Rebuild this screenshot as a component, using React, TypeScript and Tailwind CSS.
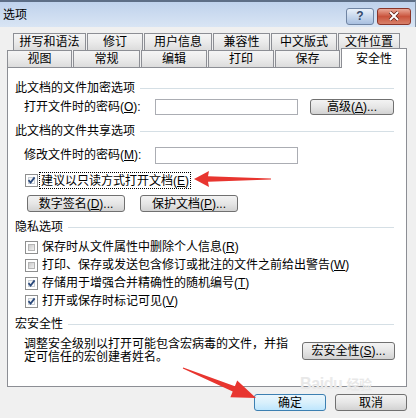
import React from "react";

const font = "font-['Liberation_Sans','Noto_Sans_CJK_SC',sans-serif]";

function Check({ checked }: { checked: boolean }) {
  return (
    <span className="w-[13px] h-[13px] border border-[#8e8f8f] bg-white p-[2px] flex shrink-0">
      <span
        className={
          checked
            ? "flex-1 flex items-center justify-center border border-[#c9cfd6] bg-gradient-to-br from-[#f4f4f4] to-[#ffffff]"
            : "flex-1 flex items-center justify-center border border-[#b5b5b5] bg-gradient-to-br from-[#cbcbcb] to-[#f1f1f1]"
        }
      >
        {checked && (
          <svg width="9" height="9" viewBox="0 0 9 9" className="-m-[2px]">
            <path d="M1.5 4.2 L3.6 6.6 L7.6 1.4" stroke="#2c4a7c" strokeWidth="1.8" fill="none" />
          </svg>
        )}
      </span>
    </span>
  );
}

function Btn({ children, className }: { children: React.ReactNode; className: string }) {
  return (
    <div
      className={
        "flex items-center justify-center rounded-[3px] border border-[#707070] bg-gradient-to-b from-[#f3f3f3] via-[#e6e6e6] to-[#d2d2d2] text-[12px] leading-none text-black " +
        className
      }
    >
      {children}
    </div>
  );
}

function Heading({ text }: { text: string }) {
  return (
    <div className="h-[16px] flex items-center pl-[7px] pr-[12px] gap-[5px] text-[12px] leading-none">
      <span>{text}</span>
      <div className="flex-1 h-px bg-[#d5dfe5]" />
    </div>
  );
}

const row1 = [
  { t: "拼写和语法", w: "w-[73px]" },
  { t: "修订", w: "w-[56px]" },
  { t: "用户信息", w: "w-[68px]" },
  { t: "兼容性", w: "w-[57px]" },
  { t: "中文版式", w: "w-[66px]" },
  { t: "文件位置", w: "w-[62px]" },
];
const row2 = [
  { t: "视图", w: "w-[65px]" },
  { t: "常规", w: "w-[67px]" },
  { t: "编辑", w: "w-[66px]" },
  { t: "打印", w: "w-[66px]" },
  { t: "保存", w: "w-[65px]" },
];

const tabCls =
  "h-[17px] border border-b-0 border-[#8c8e94] bg-gradient-to-b from-[#f5f5f5] via-[#ebebeb] to-[#dcdcdc] flex items-center justify-center text-[12px] leading-none";

export default function App() {
  return (
    <div className={"w-[416px] h-[418px] bg-[#f0f0f0] relative overflow-hidden text-black " + font}>
      {/* title bar */}
      <div className="h-[27px] border-t-2 border-[#5d6e86] border-r border-r-[#7f8da0] bg-gradient-to-b from-[#bfd2ec] to-[#d9e5f4] flex items-center pl-[3px] pr-[4px]">
        <span className="text-[12px] leading-none mt-[1px]">选项</span>
        <div className="ml-auto flex gap-[3px] mt-[3px]">
          <div className="w-[28px] h-[17px] rounded-[3px] border border-[#6f84a3] bg-gradient-to-b from-[#eaf1fa] via-[#c8d8ed] to-[#a9c0e0] flex items-center justify-center text-[12px] leading-none text-[#34496b] font-bold">
            ?
          </div>
          <div className="w-[34px] h-[17px] rounded-[3px] border border-[#8a3428] bg-gradient-to-b from-[#e9a898] via-[#c9533c] to-[#d7806a] flex items-center justify-center">
            <svg width="12" height="10" viewBox="0 0 12 10">
              <path d="M2 1 L10 9 M10 1 L2 9" stroke="#5a2018" strokeWidth="3.4" />
              <path d="M2 1 L10 9 M10 1 L2 9" stroke="#ffffff" strokeWidth="2" />
            </svg>
          </div>
        </div>
      </div>

      {/* tabs */}
      <div className="mt-[6px] flex gap-px pl-[13px]">
        {row1.map((r) => (
          <div key={r.t} className={tabCls + " " + r.w}>
            {r.t}
          </div>
        ))}
      </div>
      <div className="flex gap-px pl-[7px] h-[17px]">
        {row2.map((r) => (
          <div key={r.t} className={tabCls + " " + r.w}>
            {r.t}
          </div>
        ))}
        <div className="relative z-10 -mt-[2px] h-[20px] w-[66px] border border-b-0 border-[#8c8e94] bg-white flex items-center justify-center text-[12px] leading-none">
          安全性
        </div>
      </div>

      {/* panel */}
      <div className="ml-[7px] w-[400px] h-[320px] border border-[#8c8e94] bg-white flex flex-col pt-[12px]">
        <Heading text="此文档的文件加密选项" />
        <div className="mt-[2px] h-[17px] flex items-center pl-[16px] text-[12px] leading-none">
          <span className="w-[131px]">
            打开文件时的密码(<u>O</u>):
          </span>
          <div className="w-[143px] h-[16px] border border-[#abadb3] bg-white" />
          <Btn className="ml-[12px] w-[84px] h-[16px]">
            高级(<u>A</u>)...
          </Btn>
        </div>

        <div className="mt-[8px]">
          <Heading text="此文档的文件共享选项" />
        </div>
        <div className="mt-[7px] h-[18px] flex items-center pl-[16px] text-[12px] leading-none">
          <span className="w-[131px]">
            修改文件时的密码(<u>M</u>):
          </span>
          <div className="w-[143px] h-[17px] border border-[#abadb3] bg-white" />
        </div>

        <div className="mt-[8px] h-[17px] flex items-center pl-[17px] text-[12px] leading-none">
          <Check checked />
          <span className="ml-[1px] h-[17px] flex items-center px-[1px] border border-dotted border-black">
            建议以只读方式打开文档(<u>E</u>)
          </span>
        </div>

        <div className="mt-[6px] h-[17px] flex items-center pl-[19px] gap-[15px]">
          <Btn className="w-[98px] h-[17px]">
            数字签名(<u>D</u>)...
          </Btn>
          <Btn className="w-[98px] h-[17px]">
            保护文档(<u>P</u>)...
          </Btn>
        </div>

        <div className="mt-[7px]">
          <Heading text="隐私选项" />
        </div>
        <div className="mt-[3px] flex flex-col pl-[17px] text-[12px] leading-none">
          <div className="h-[18px] flex items-center gap-[4px]">
            <Check checked={false} />
            <span>
              保存时从文件属性中删除个人信息(<u>R</u>)
            </span>
          </div>
          <div className="h-[18px] flex items-center gap-[4px]">
            <Check checked={false} />
            <span>
              打印、保存或发送包含修订或批注的文件之前给出警告(<u>W</u>)
            </span>
          </div>
          <div className="h-[18px] flex items-center gap-[4px]">
            <Check checked />
            <span>
              存储用于增强合并精确性的随机编号(<u>T</u>)
            </span>
          </div>
          <div className="h-[18px] flex items-center gap-[4px]">
            <Check checked />
            <span>
              打开或保存时标记可见(<u>V</u>)
            </span>
          </div>
        </div>

        <div className="mt-[6px]">
          <Heading text="宏安全性" />
        </div>
        <div className="mt-[6px] flex items-center pl-[16px] pr-[11px]">
          <p className="text-[12px] leading-[13px]">
            调整安全级别以打开可能包含宏病毒的文件，并指
            <br />
            定可信任的宏创建者姓名。
          </p>
          <Btn className="ml-auto w-[93px] h-[18px]">
            宏安全性(<u>S</u>)...
          </Btn>
        </div>
      </div>

      {/* bottom buttons */}
      <div className="mt-[7px] flex justify-end gap-[9px] pr-[9px]">
        <div className="w-[72px] h-[17px] rounded-[3px] border border-[#3c7fb1] bg-gradient-to-b from-[#eaf6fd] via-[#d9f0fc] to-[#bee6fd] flex items-center justify-center text-[12px] leading-none">
          确定
        </div>
        <Btn className="w-[72px] h-[17px]">取消</Btn>
      </div>

      {/* watermark */}
      <div className="absolute left-[300px] top-[376px] text-[16px] font-bold leading-none text-[#e8e8e8] tracking-tight pointer-events-none">
        Bai<span className="text-[#ebebeb]">du</span> <span className="text-[13px]">经验</span>
      </div>

      {/* red arrows */}
      <svg className="absolute inset-0 pointer-events-none" width="416" height="418" viewBox="0 0 416 418">
        <polygon
          points="194,179 209,171 208,176.2 271,178.4 271,179.6 208,181.8 209,187"
          fill="#e8352f"
        />
        <polygon
          points="256,398 230.4,397.2 232.7,391.5 182.8,368.6 183.2,367.4 234.9,386.3 237.2,380.6"
          fill="#e8352f"
        />
      </svg>
    </div>
  );
}
